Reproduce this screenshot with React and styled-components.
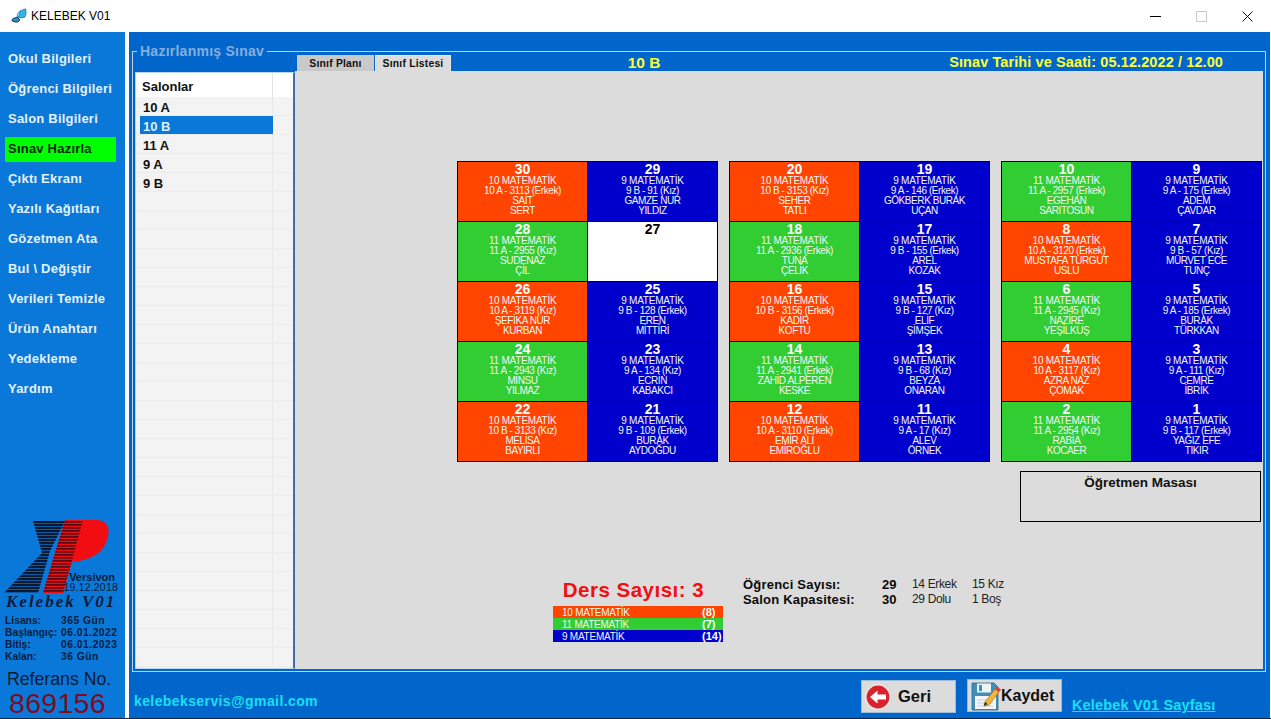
import React from 'react';
import styled, { createGlobalStyle } from 'styled-components';

const Global = createGlobalStyle`
  html, body { margin: 0; padding: 0; background: #fff; overflow: hidden; }
  body { font-family: "Liberation Sans", Arial, sans-serif; }
  * { box-sizing: border-box; }
`;

const Windows = styled.div`
  width: 1271px;
  height: 719px;
  display: flex;
  flex-direction: column;
  background: #fff;
`;
const TitleBar = styled.header`
  height: 32px;
  display: flex;
  align-items: center;
  padding-left: 11px;
  font-size: 12px;
  color: #000;
`;
const TitleText = styled.span`
  margin-left: 4px;
`;
const WinControls = styled.div`
  margin-left: auto;
  padding-right: 1px;
  display: flex;
  align-items: center;
`;
const WinBtn = styled.div`
  width: 46px;
  height: 32px;
  display: flex;
  align-items: center;
  justify-content: center;
`;
const Body = styled.div`
  flex: 1;
  display: flex;
  min-height: 0;
  padding-right: 1px;
  border-bottom: 1px solid #12263f;
`;
const Sidebar = styled.nav`
  width: 125px;
  flex-shrink: 0;
  background: #0a78d8;
  display: flex;
  flex-direction: column;
  padding: 15px 0 0 5px;
`;
const NavItem = styled.div`
  width: 111px;
  height: 25px;
  margin-bottom: 5px;
  padding: 0 0 2px 3px;
  display: flex;
  align-items: center;
  font-size: 13px;
  font-weight: bold;
  white-space: nowrap;
  letter-spacing: 0.22px;
  color: ${p => (p.$active ? '#06280a' : '#e4f1fb')};
  background: ${p => (p.$active ? '#00ff00' : 'transparent')};
`;
const SideBottom = styled.div`
  margin-top: auto;
  display: flex;
  flex-direction: column;
  margin-left: -5px;
`;
const LogoBox = styled.div`
  position: relative;
  height: 82px;
  width: 125px;
`;
const VersionBox = styled.div`
  position: absolute;
  right: 7px;
  top: 60px;
  text-align: right;
  font-size: 11px;
  line-height: 10px;
  color: #0b1a33;
  font-weight: bold;
`;
const VersionName = styled.div`
  margin-right: 3px;
`;
const VersionDate = styled.div`
  font-weight: normal;
  font-size: 10.5px;
  letter-spacing: 0.2px;
`;
const Script = styled.div`
  height: 20px;
  padding-left: 6px;
  margin-top: -2px;
  font-family: "Liberation Serif", serif;
  font-style: italic;
  font-weight: bold;
  font-size: 17px;
  letter-spacing: 2px;
  color: #0a1a3a;
  white-space: nowrap;
`;
const LicenseGrid = styled.div`
  display: grid;
  grid-template-columns: 56px 1fr;
  grid-auto-rows: 12px;
  margin: 3px 0 0 5px;
  font-size: 10.3px;
  font-weight: bold;
  color: #0b1d3d;
  line-height: 12px;
  white-space: nowrap;
`;
const LicenseValue = styled.span`
  letter-spacing: 0.5px;
`;
const RefLabel = styled.div`
  margin: 6px 0 0 7px;
  font-size: 17.7px;
  line-height: 20px;
  color: #0b1a33;
  white-space: nowrap;
`;
const RefNo = styled.div`
  margin: -1px 0 0 9px;
  font-size: 28.5px;
  line-height: 30px;
  height: 30px;
  color: #7d0c1e;
  letter-spacing: 0.3px;
`;
const Main = styled.main`
  flex: 1;
  margin-left: 4px;
  background: #0066cc;
  display: flex;
  flex-direction: column;
  padding: 19px 4px 0 3px;
  min-width: 0;
`;
const GroupBox = styled.section`
  position: relative;
  height: 621px;
  border: 1px solid #b9d4ee;
  padding: 2px 1px 2px 2px;
  display: flex;
  flex-direction: column;
`;
const Legend = styled.div`
  position: absolute;
  left: 4px;
  top: -9px;
  padding: 0 3px;
  background: #0066cc;
  font-size: 14px;
  line-height: 16px;
  font-weight: bold;
  color: #86aedc;
  letter-spacing: 0.25px;
`;
const TopRow = styled.div`
  height: 17px;
  display: flex;
  align-items: flex-end;
  padding-left: 162px;
`;
const Tab = styled.div`
  width: ${p => p.$w}px;
  height: 16px;
  margin-right: 1px;
  background: ${p => (p.$on ? '#c9c9c9' : '#dcdcdc')};
  border: 1px solid ${p => (p.$on ? '#c9c9c9' : '#e8e8e8')};
  border-bottom: none;
  font-size: 10.4px;
  font-weight: bold;
  line-height: 16px;
  text-align: center;
  letter-spacing: 0.2px;
  color: #111;
  white-space: nowrap;
`;
const ClassTitle = styled.div`
  width: 94px;
  margin-left: 145px;
  text-align: center;
  color: #ffff33;
  font-size: 15.5px;
  line-height: 17px;
  font-weight: bold;
`;
const ExamDate = styled.div`
  margin-left: auto;
  margin-right: 41px;
  color: #ffff33;
  font-size: 14.5px;
  line-height: 17px;
  font-weight: bold;
  letter-spacing: 0.1px;
  white-space: nowrap;
`;
const Columns = styled.div`
  flex: 1;
  display: flex;
  min-height: 0;
  margin-top: 1px;
`;
const ListPanel = styled.div`
  width: 160px;
  flex-shrink: 0;
  display: flex;
  flex-direction: column;
  background: #f3f3f3;
  border: 1px solid #b9d4ee;
  border-right: 2px solid #3f6fa8;
  overflow: hidden;
`;
const ListHead = styled.div`
  height: 24px;
  flex-shrink: 0;
  background: #fff;
  display: grid;
  grid-template-columns: 137px 1fr;
  font-size: 13px;
  font-weight: bold;
  line-height: 27px;
  color: #111;
`;
const HeadCell = styled.div`
  padding-left: 6px;
  border-right: 1px solid #e4e4e4;
`;
const ListRow = styled.div`
  height: 19px;
  flex-shrink: 0;
  display: grid;
  grid-template-columns: 137px 1fr;
  grid-template-rows: 18px;
  border-bottom: 1px solid #ececec;
`;
const RowName = styled.div`
  margin-left: 4px;
  padding: 2px 0 0 3px;
  font-size: 13px;
  line-height: 18px;
  font-weight: bold;
  color: ${p => (p.$sel ? '#dfefff' : '#111')};
  background: ${p => (p.$sel ? '#0a78d8' : 'transparent')};
  border-right: 1px solid ${p => (p.$sel ? '#0a78d8' : '#e8e8e8')};
`;
const Canvas = styled.div`
  flex: 1;
  min-width: 0;
  background: #dcdcdc;
  padding: 90px 1px 0 162px;
  display: flex;
  flex-direction: column;
  margin-right: 1px;
  margin-top: -1px;
`;
const Blocks = styled.div`
  display: flex;
  justify-content: space-between;
`;
const Block = styled.div`
  width: 261px;
  height: 301px;
  display: grid;
  grid-template-columns: 129px 129px;
  grid-auto-rows: 59px;
  gap: 1px;
  padding: 1px;
  background: #000;
`;
const Seat = styled.div`
  background: ${p => p.$bg};
  color: ${p => (p.$bg === '#ffffff' ? '#000' : '#f2f6f2')};
  text-align: center;
  font-size: 10px;
  line-height: 10px;
  letter-spacing: -0.42px;
  overflow: hidden;
  white-space: nowrap;
`;
const SeatNo = styled.div`
  font-size: 14px;
  font-weight: bold;
  line-height: 14px;
  height: 14px;
  letter-spacing: 0;
  color: ${p => (p.$dark ? '#000' : '#fff')};
`;
const SeatSubject = styled.div`
  letter-spacing: -0.25px;
`;
const DeskRow = styled.div`
  display: flex;
  justify-content: flex-end;
  padding-right: 1px;
  margin-top: 9px;
`;
const Desk = styled.div`
  width: 241px;
  height: 51px;
  border: 1px solid #000;
  text-align: center;
  font-size: 13.5px;
  font-weight: bold;
  line-height: 22px;
  color: #111;
`;
const Summary = styled.div`
  display: flex;
  margin-top: 56px;
  margin-left: 96px;
`;
const Lessons = styled.div`
  width: 170px;
  display: flex;
  flex-direction: column;
`;
const LessonTitle = styled.div`
  height: 28px;
  padding-right: 9px;
  text-align: center;
  font-size: 20.5px;
  font-weight: bold;
  line-height: 24px;
  letter-spacing: 0.5px;
  color: #f01010;
  white-space: nowrap;
`;
const Lesson = styled.div`
  height: 12px;
  display: flex;
  justify-content: space-between;
  align-items: center;
  padding: 0 1px 0 9px;
  background: ${p => p.$bg};
  font-size: 10px;
  letter-spacing: -0.25px;
  color: #f2f6f2;
`;
const LessonCount = styled.b`
  width: 20px;
  font-size: 11px;
  letter-spacing: 0;
  color: #fff;
`;
const Stats = styled.div`
  margin: -1px 0 0 20px;
  display: grid;
  grid-template-columns: 139px 30px 60px auto;
  grid-auto-rows: 15px;
  font-size: 12px;
  letter-spacing: -0.35px;
  line-height: 15px;
  color: #222;
  white-space: nowrap;
`;
const StatLabel = styled.b`
  font-size: 13px;
  letter-spacing: 0.2px;
  color: #0a0a0a;
`;
const StatNum = styled.b`
  font-size: 13px;
  letter-spacing: 0;
  color: #0a0a0a;
`;
const Footer = styled.footer`
  flex: 1;
  display: flex;
  padding-left: 2px;
  min-height: 0;
`;
const Email = styled.div`
  align-self: flex-end;
  margin-bottom: 9px;
  font-size: 14px;
  font-weight: bold;
  letter-spacing: 0.4px;
  color: #18e0f0;
  line-height: 16px;
`;
const Btn = styled.div`
  width: 95px;
  height: 33px;
  margin-top: ${p => p.$top}px;
  margin-left: ${p => p.$left};
  background: #dcdcdc;
  border: 1px solid #9dbcd8;
  display: flex;
  align-items: center;
  padding-left: 3px;
  font-weight: bold;
  color: #111;
  flex-shrink: 0;
`;
const BtnLabel = styled.span`
  margin-left: ${p => p.$m}px;
  font-size: ${p => p.$s}px;
`;
const PageLink = styled.a`
  align-self: flex-end;
  margin: 0 0 5px 10px;
  font-size: 14.6px;
  line-height: 16px;
  font-weight: bold;
  letter-spacing: 0.12px;
  color: #18e0f0;
  text-decoration: underline;
  white-space: nowrap;
`;

const O = '#ff4500', B = '#0000cd', G = '#32cd32', W = '#ffffff';
const M = { [O]: '10 MATEMATİK', [B]: '9 MATEMATİK', [G]: '11 MATEMATİK' };
const s = (no, bg, info, a, b) => ({ no, bg, info, a, b });
const blocks = [
  [
    s(30, O, '10 A - 3113 (Erkek)', 'SAİT', 'SERT'),
    s(29, B, '9 B - 91 (Kız)', 'GAMZE NUR', 'YILDIZ'),
    s(28, G, '11 A - 2955 (Kız)', 'SUDENAZ', 'ÇİL'),
    s(27, W),
    s(26, O, '10 A - 3119 (Kız)', 'ŞEFİKA NUR', 'KURBAN'),
    s(25, B, '9 B - 128 (Erkek)', 'EREN', 'MİTTİRİ'),
    s(24, G, '11 A - 2943 (Kız)', 'MİNSU', 'YILMAZ'),
    s(23, B, '9 A - 134 (Kız)', 'ECRİN', 'KABAKCI'),
    s(22, O, '10 B - 3133 (Kız)', 'MELİSA', 'BAYIRLI'),
    s(21, B, '9 B - 109 (Erkek)', 'BURAK', 'AYDOĞDU'),
  ],
  [
    s(20, O, '10 B - 3153 (Kız)', 'SEHER', 'TATLI'),
    s(19, B, '9 A - 146 (Erkek)', 'GÖKBERK BURAK', 'UÇAN'),
    s(18, G, '11 A - 2936 (Erkek)', 'TUNA', 'ÇELİK'),
    s(17, B, '9 B - 155 (Erkek)', 'AREL', 'KOZAK'),
    s(16, O, '10 B - 3156 (Erkek)', 'KADİR', 'KOFTU'),
    s(15, B, '9 B - 127 (Kız)', 'ELİF', 'ŞİMŞEK'),
    s(14, G, '11 A - 2941 (Erkek)', 'ZAHİD ALPEREN', 'KESKE'),
    s(13, B, '9 B - 68 (Kız)', 'BEYZA', 'ONARAN'),
    s(12, O, '10 A - 3110 (Erkek)', 'EMİR ALİ', 'EMİROĞLU'),
    s(11, B, '9 A - 17 (Kız)', 'ALEV', 'ÖRNEK'),
  ],
  [
    s(10, G, '11 A - 2957 (Erkek)', 'EGEHAN', 'SARITOSUN'),
    s(9, B, '9 A - 175 (Erkek)', 'ADEM', 'ÇAVDAR'),
    s(8, O, '10 A - 3120 (Erkek)', 'MUSTAFA TURGUT', 'USLU'),
    s(7, B, '9 B - 57 (Kız)', 'MÜRVET ECE', 'TUNÇ'),
    s(6, G, '11 A - 2945 (Kız)', 'NAZİRE', 'YEŞİLKUŞ'),
    s(5, B, '9 A - 185 (Erkek)', 'BURAK', 'TÜRKKAN'),
    s(4, O, '10 A - 3117 (Kız)', 'AZRA NAZ', 'ÇOMAK'),
    s(3, B, '9 A - 111 (Kız)', 'CEMRE', 'İBRİK'),
    s(2, G, '11 A - 2954 (Kız)', 'RABİA', 'KOCAER'),
    s(1, B, '9 B - 117 (Erkek)', 'YAĞIZ EFE', 'TIKIR'),
  ],
];
const navItems = ['Okul Bilgileri', 'Öğrenci Bilgileri', 'Salon Bilgileri', 'Sınav Hazırla', 'Çıktı Ekranı', 'Yazılı Kağıtları', 'Gözetmen Ata', 'Bul \\ Değiştir', 'Verileri Temizle', 'Ürün Anahtarı', 'Yedekleme', 'Yardım'];
const rooms = ['10 A', '10 B', '11 A', '9 A', '9 B'];

const Butterfly = () => (
  <svg width="16" height="16" viewBox="0 0 16 16">
    <path d="M6 9 L9 3 L14.5 .8 Q15.5 3 15 6 L14 9 Q10 11 6 9Z" fill="#35b4e8" stroke="#0c5c8c" strokeWidth=".6" />
    <path d="M6.5 9.5 L9 12 Q7 15 4 14 L1 13 Q.5 11 3 10Z" fill="#2a8fca" stroke="#123" strokeWidth=".8" />
    <path d="M6 9 L6.5 5.5 L9 3 L8 8.5Z" fill="#7fd6f5" stroke="#0c5c8c" strokeWidth=".4" />
  </svg>
);

const XPLogo = () => {
  const stripes = [];
  for (let y = 6; y < 79; y += 3) stripes.push(y);
  return (
    <svg width="125" height="82" viewBox="0 -3 125 82">
      <defs>
        <clipPath id="xclip"><path d="M33 6 H65 L50 36 L38 78 H4 L42 38 Z" /></clipPath>
        <clipPath id="rclip"><path d="M43 78 L65 5 H83 L63 78 Z" /></clipPath>
      </defs>
      <g clipPath="url(#xclip)">
        <rect x="0" y="0" width="70" height="82" fill="#0a5aa6" />
        {stripes.map(y => <rect key={y} x="0" y={y} width="70" height="2" fill="#061a33" />)}
      </g>
      <path d="M65 5 H98 Q111 7 108 22 Q103 44 72 47 L63 78 H43 Z" fill="#f20d12" />
      <g clipPath="url(#rclip)">
        {stripes.map(y => <rect key={y} x="30" y={y} width="60" height="1.7" fill="#5a0a12" />)}
      </g>
    </svg>
  );
};

const BackIcon = () => (
  <svg width="26" height="26" viewBox="0 0 26 26">
    <circle cx="13" cy="13" r="12.2" fill="#d8232e" stroke="#efe4e4" strokeWidth="1.6" />
    <path d="M5 13 L12.5 6.5 V10.5 H21 V15.5 H12.5 V19.5 Z" fill="#fff" />
  </svg>
);

const SaveIcon = () => (
  <svg width="30" height="30" viewBox="0 0 30 30">
    <path d="M1 2 H23 L27 6 V29 H1 Z" fill="#3f8fb8" stroke="#2b6b8e" strokeWidth=".8" />
    <rect x="6" y="2.5" width="14" height="9" fill="#eef3f5" />
    <rect x="8" y="4" width="3" height="6" fill="#3f8fb8" />
    <rect x="4" y="15" width="21" height="13" fill="#f4f6f7" />
    <path d="M6 19 H22 M6 22 H22 M6 25 H22" stroke="#bdd0da" strokeWidth="1" />
    <path d="M14 21 L24 8 L28 11 L18 24 L13 25Z" fill="#f3b63a" stroke="#a8701a" strokeWidth=".7" />
    <path d="M24 8 L26 5.5 L30 8.5 L28 11Z" fill="#d8433a" />
    <path d="M13 25 L14 21 L16.5 23Z" fill="#222" />
  </svg>
);

export default function App() {
  return (
    <Windows>
      <Global />
      <TitleBar>
        <Butterfly />
        <TitleText>KELEBEK V01</TitleText>
        <WinControls>
          <WinBtn>
            <svg width="11" height="11" viewBox="0 0 11 11"><path d="M0 5.5H11" stroke="#000" /></svg>
          </WinBtn>
          <WinBtn>
            <svg width="11" height="11" viewBox="0 0 11 11"><rect x=".5" y=".5" width="10" height="10" fill="none" stroke="#c8c8c8" /></svg>
          </WinBtn>
          <WinBtn>
            <svg width="11" height="11" viewBox="0 0 11 11"><path d="M.5 .5L10.5 10.5M10.5 .5L.5 10.5" stroke="#111" /></svg>
          </WinBtn>
        </WinControls>
      </TitleBar>
      <Body>
        <Sidebar>
          {navItems.map(n => <NavItem key={n} $active={n === 'Sınav Hazırla'}>{n}</NavItem>)}
          <SideBottom>
            <LogoBox>
              <XPLogo />
              <VersionBox>
                <VersionName>Versivon</VersionName>
                <VersionDate>19.12.2018</VersionDate>
              </VersionBox>
            </LogoBox>
            <Script>Kelebek V01</Script>
            <LicenseGrid>
              <span>Lisans:</span><LicenseValue>365 Gün</LicenseValue>
              <span>Başlangıç:</span><LicenseValue>06.01.2022</LicenseValue>
              <span>Bitiş:</span><LicenseValue>06.01.2023</LicenseValue>
              <span>Kalan:</span><LicenseValue>36 Gün</LicenseValue>
            </LicenseGrid>
            <RefLabel>Referans No.</RefLabel>
            <RefNo>869156</RefNo>
          </SideBottom>
        </Sidebar>
        <Main>
          <GroupBox>
            <Legend>Hazırlanmış Sınav</Legend>
            <TopRow>
              <Tab $w={77} $on>Sınıf Planı</Tab>
              <Tab $w={76}>Sınıf Listesi</Tab>
              <ClassTitle>10 B</ClassTitle>
              <ExamDate>Sınav Tarihi ve Saati: 05.12.2022 / 12.00</ExamDate>
            </TopRow>
            <Columns>
              <ListPanel>
                <ListHead><HeadCell>Salonlar</HeadCell></ListHead>
                {Array.from({ length: 30 }, (_, i) => (
                  <ListRow key={i}>
                    <RowName $sel={rooms[i] === '10 B'}>{rooms[i] || ''}</RowName>
                  </ListRow>
                ))}
              </ListPanel>
              <Canvas>
                <Blocks>
                  {blocks.map((b, i) => (
                    <Block key={i}>
                      {b.map(c => (
                        <Seat key={c.no} $bg={c.bg}>
                          <SeatNo $dark={c.bg === W}>{c.no}</SeatNo>
                          {c.info && <SeatSubject>{M[c.bg]}</SeatSubject>}
                          {c.info && <div>{c.info}</div>}
                          {c.info && <div>{c.a}</div>}
                          {c.info && <div>{c.b}</div>}
                        </Seat>
                      ))}
                    </Block>
                  ))}
                </Blocks>
                <DeskRow><Desk>Öğretmen Masası</Desk></DeskRow>
                <Summary>
                  <Lessons>
                    <LessonTitle>Ders Sayısı: 3</LessonTitle>
                    <Lesson $bg={O}><span>10 MATEMATİK</span><LessonCount>(8)</LessonCount></Lesson>
                    <Lesson $bg={G}><span>11 MATEMATİK</span><LessonCount>(7)</LessonCount></Lesson>
                    <Lesson $bg={B}><span>9 MATEMATİK</span><LessonCount>(14)</LessonCount></Lesson>
                  </Lessons>
                  <Stats>
                    <StatLabel>Öğrenci Sayısı:</StatLabel><StatNum>29</StatNum><span>14 Erkek</span><span>15 Kız</span>
                    <StatLabel>Salon Kapasitesi:</StatLabel><StatNum>30</StatNum><span>29 Dolu</span><span>1 Boş</span>
                  </Stats>
                </Summary>
              </Canvas>
            </Columns>
          </GroupBox>
          <Footer>
            <Email>kelebekservis@gmail.com</Email>
            <Btn $top={8} $left="543px"><BackIcon /><BtnLabel $m={7} $s={16.5}>Geri</BtnLabel></Btn>
            <Btn $top={7} $left="11px"><SaveIcon /><BtnLabel $m={0} $s={16}>Kaydet</BtnLabel></Btn>
            <PageLink>Kelebek V01 Sayfası</PageLink>
          </Footer>
        </Main>
      </Body>
    </Windows>
  );
}
